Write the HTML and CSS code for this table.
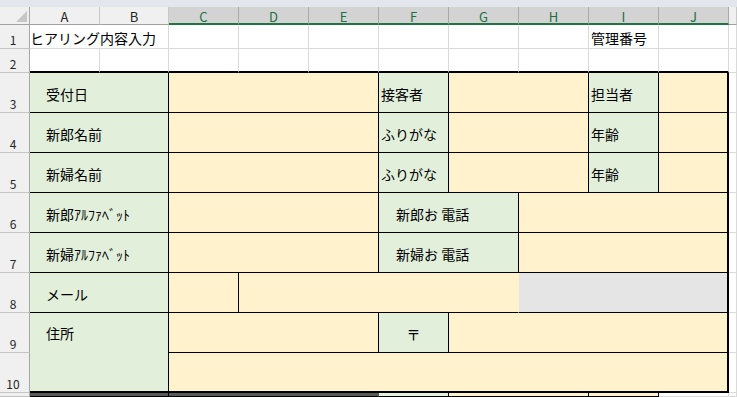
FILE: index.html
```html
<!DOCTYPE html>
<html lang="ja">
<head>
<meta charset="utf-8">
<title>ヒアリング内容入力</title>
<link rel="stylesheet" href="styles.css">
</head>
<body>
<div class="strip"></div>
<div class="sheet">
  <div class="corner"><span class="tri"></span></div>
  <div class="ch">A</div><div class="ch">B</div>
  <div class="ch sel">C</div><div class="ch sel">D</div><div class="ch sel">E</div><div class="ch sel">F</div>
  <div class="ch sel">G</div><div class="ch sel">H</div><div class="ch sel">I</div><div class="ch sel">J</div>
  <div class="ch"></div>

  <div class="rh">1</div>
  <div class="c s2">ヒアリング内容入力</div>
  <div class="c"></div><div class="c"></div><div class="c"></div><div class="c"></div><div class="c"></div><div class="c"></div>
  <div class="c lf">管理番号</div><div class="c"></div><div class="c"></div>

  <div class="rh">2</div>
  <div class="c et"></div><div class="c et"></div><div class="c et"></div><div class="c et"></div><div class="c et"></div>
  <div class="c et"></div><div class="c et"></div><div class="c et"></div><div class="c et"></div><div class="c et"></div>
  <div class="c"></div>

  <div class="rh">3</div>
  <div class="c s2 g b lbl">受付日</div>
  <div class="c s3 y b"></div>
  <div class="c g b lf">接客者</div>
  <div class="c s2 y b"></div>
  <div class="c g b lf">担当者</div>
  <div class="c y b er"></div>
  <div class="c"></div>

  <div class="rh">4</div>
  <div class="c s2 g b lbl">新郎名前</div>
  <div class="c s3 y b"></div>
  <div class="c g b lf">ふりがな</div>
  <div class="c s2 y b"></div>
  <div class="c g b lf">年齢</div>
  <div class="c y b er"></div>
  <div class="c"></div>

  <div class="rh">5</div>
  <div class="c s2 g b lbl">新婦名前</div>
  <div class="c s3 y b"></div>
  <div class="c g b lf">ふりがな</div>
  <div class="c s2 y b"></div>
  <div class="c g b lf">年齢</div>
  <div class="c y b er"></div>
  <div class="c"></div>

  <div class="rh">6</div>
  <div class="c s2 g b lbl">新郎ｱﾙﾌｧﾍﾞｯﾄ</div>
  <div class="c s3 y b"></div>
  <div class="c s2 g b lp">新郎お 電話</div>
  <div class="c s3 y b er"></div>
  <div class="c"></div>

  <div class="rh">7</div>
  <div class="c s2 g b lbl">新婦ｱﾙﾌｧﾍﾞｯﾄ</div>
  <div class="c s3 y b"></div>
  <div class="c s2 g b lp">新婦お 電話</div>
  <div class="c s3 y b er"></div>
  <div class="c"></div>

  <div class="rh">8</div>
  <div class="c s2 g b lbl">メール</div>
  <div class="c y b"></div>
  <div class="c s4 y b nr"></div>
  <div class="c s3 gr b er"></div>
  <div class="c"></div>

  <div class="rh">9</div>
  <div class="c s2 r2 g b eb lbl top">住所</div>
  <div class="c s3 y b"></div>
  <div class="c g b ctr">〒</div>
  <div class="c s4 y b er"></div>
  <div class="c"></div>

  <div class="rh">10</div>
  <div class="c s8 y b er eb"></div>
  <div class="c"></div>

  <div class="rh"></div>
  <div class="c s2 dk b"></div>
  <div class="c s3 dk b dkr"></div>
  <div class="c g b"></div>
  <div class="c s2 y b"></div>
  <div class="c y b"></div>
  <div class="c"></div>
  <div class="c"></div>
</div>
</body>
</html>
```
FILE: styles.css
```css
* {
  box-sizing: border-box;
}

html,
body {
  margin: 0;
  padding: 0;
  overflow: hidden;
  background: #ffffff;
}

body {
  width: 737px;
  height: 397px;
  font-family: "Noto Sans CJK JP", "Noto Sans", sans-serif;
  color: #000000;
}

.strip {
  height: 7px;
  background: #e3e6ec;
}

.sheet {
  display: grid;
  grid-template-columns: 30px 70px 69px repeat(8, 70px) 1fr;
  grid-template-rows: 18px 24px 24px repeat(8, 40px) 4px;
}

/* headers */
.corner {
  background: #f0f0f0;
  border-right: 1px solid #a6a6a6;
  border-bottom: 1px solid #a0a0a0;
  display: flex;
  align-items: flex-end;
  justify-content: flex-end;
  padding: 0 2px 2px 0;
}

.tri {
  width: 11px;
  height: 11px;
  background: #c6c6c6;
  clip-path: polygon(100% 0, 100% 100%, 0 100%);
}

.ch {
  background: #f0f0f0;
  border-right: 1px solid #c8c8c8;
  border-bottom: 1px solid #a0a0a0;
  font-size: 13px;
  line-height: 1;
  display: flex;
  align-items: center;
  justify-content: center;
  padding-top: 1px;
  color: #262626;
}

.ch.sel {
  background: #d3d3d3;
  color: #1e6e42;
  border-right-color: #a9a9a9;
  border-bottom: 2px solid #217346;
  padding-top: 2px;
}

.rh {
  background: #f0f0f0;
  border-right: 1px solid #a6a6a6;
  border-bottom: 1px solid #c4c4c4;
  font-size: 12px;
  line-height: 1;
  display: flex;
  align-items: flex-end;
  justify-content: center;
  padding: 0 3px 2px 0;
  color: #262626;
}

/* cells */
.c {
  border-right: 1px solid #dadada;
  border-bottom: 1px solid #dadada;
  font-size: 14px;
  display: flex;
  align-items: center;
  white-space: nowrap;
  overflow: hidden;
  padding-top: 2px;
}

.b {
  border-right-color: #000000;
  border-bottom-color: #000000;
}

.nr {
  border-right-color: transparent;
}

.et {
  border-bottom: 2px solid #000000;
}

.er {
  border-right: 2px solid #000000;
}

.eb {
  border-bottom: 2px solid #000000;
}

.g {
  background: #e2efda;
}

.y {
  background: #fff2cc;
}

.gr {
  background: #e5e5e5;
}

.dk {
  background: #595959;
}

.dkr {
  border-right-color: #595959;
}

.s2 {
  grid-column: span 2;
}

.s3 {
  grid-column: span 3;
}

.s4 {
  grid-column: span 4;
}

.s8 {
  grid-column: span 8;
}

.r2 {
  grid-row: span 2;
}

.lbl {
  padding-left: 16px;
}

.lf {
  padding-left: 2px;
}

.lp {
  padding-left: 17px;
}

.ctr {
  justify-content: center;
}

.top {
  align-items: flex-start;
  padding-top: 10px;
}
```
